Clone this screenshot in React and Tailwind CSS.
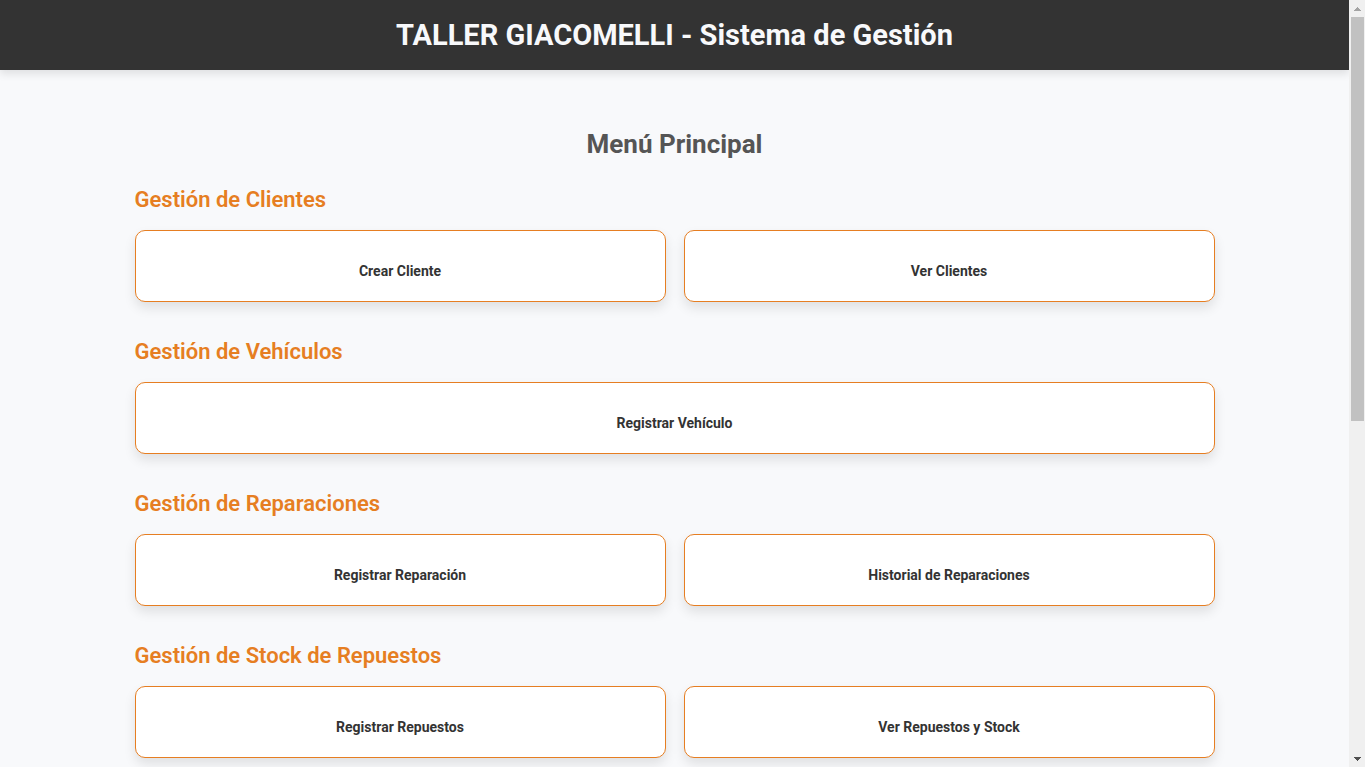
const sections = [
  { title: "Gestión de Clientes", actions: ["Crear Cliente", "Ver Clientes"] },
  { title: "Gestión de Vehículos", actions: ["Registrar Vehículo"] },
  { title: "Gestión de Reparaciones", actions: ["Registrar Reparación", "Historial de Reparaciones"] },
  { title: "Gestión de Stock de Repuestos", actions: ["Registrar Repuestos", "Ver Repuestos y Stock"] },
];

function MenuSection({ title, actions }) {
  return (
    <section>
      <h3 className="text-[22px] leading-8 font-semibold text-[#e67e22]">{title}</h3>
      <div className="mt-[14px] flex gap-[18px]">
        {actions.map((label) => (
          <button
            key={label}
            type="button"
            className="flex-1 cursor-pointer rounded-[10px] border border-[#e67e22] bg-white px-5 pt-[30px] pb-5 text-sm font-bold text-[#333333] shadow-[0_6px_12px_rgba(0,0,0,0.1)]"
          >
            {label}
          </button>
        ))}
      </div>
    </section>
  );
}

function ScrollRail() {
  return (
    <div aria-hidden="true" className="flex w-4 shrink-0 flex-col items-center bg-[#f0f0f0]">
      <svg className="h-[17px] w-4 shrink-0" viewBox="0 0 16 17" shapeRendering="crispEdges">
        <path d="M8 7h1v1h1v1h1v1h1v1H5v-1h1V9h1V8h1z" fill="#a3a3a3" />
      </svg>
      <div className="min-h-0 w-[13px] flex-[404] bg-[#c1c1c1]" />
      <div className="min-h-0 flex-[329]" />
      <svg className="h-[17px] w-4 shrink-0" viewBox="0 0 16 17" shapeRendering="crispEdges">
        <path d="M5 7h7v1h-1v1h-1v1H9v1H8v-1H7V9H6V8H5z" fill="#505050" />
      </svg>
    </div>
  );
}

export default function App() {
  return (
    <div className="flex h-screen overflow-hidden bg-[#f8f9fb] font-[Roboto,sans-serif]">
      <div className="min-w-0 flex-1 overflow-hidden">
        <header className="bg-[#333333] px-5 py-[15px] text-center shadow-[0_4px_8px_rgba(0,0,0,0.1)]">
          <h1 className="text-[29px] leading-10 font-bold text-[#f8f9fb]">
            TALLER GIACOMELLI - Sistema de Gestión
          </h1>
        </header>
        <main className="mx-auto max-w-[1120px] px-5 pt-[54px] pb-10">
          <h2 className="text-center text-[26px] leading-10 font-bold text-[#555555]">Menú Principal</h2>
          <div className="mt-5 flex flex-col gap-[34px]">
            {sections.map((section) => (
              <MenuSection key={section.title} {...section} />
            ))}
          </div>
        </main>
      </div>
      <ScrollRail />
    </div>
  );
}
